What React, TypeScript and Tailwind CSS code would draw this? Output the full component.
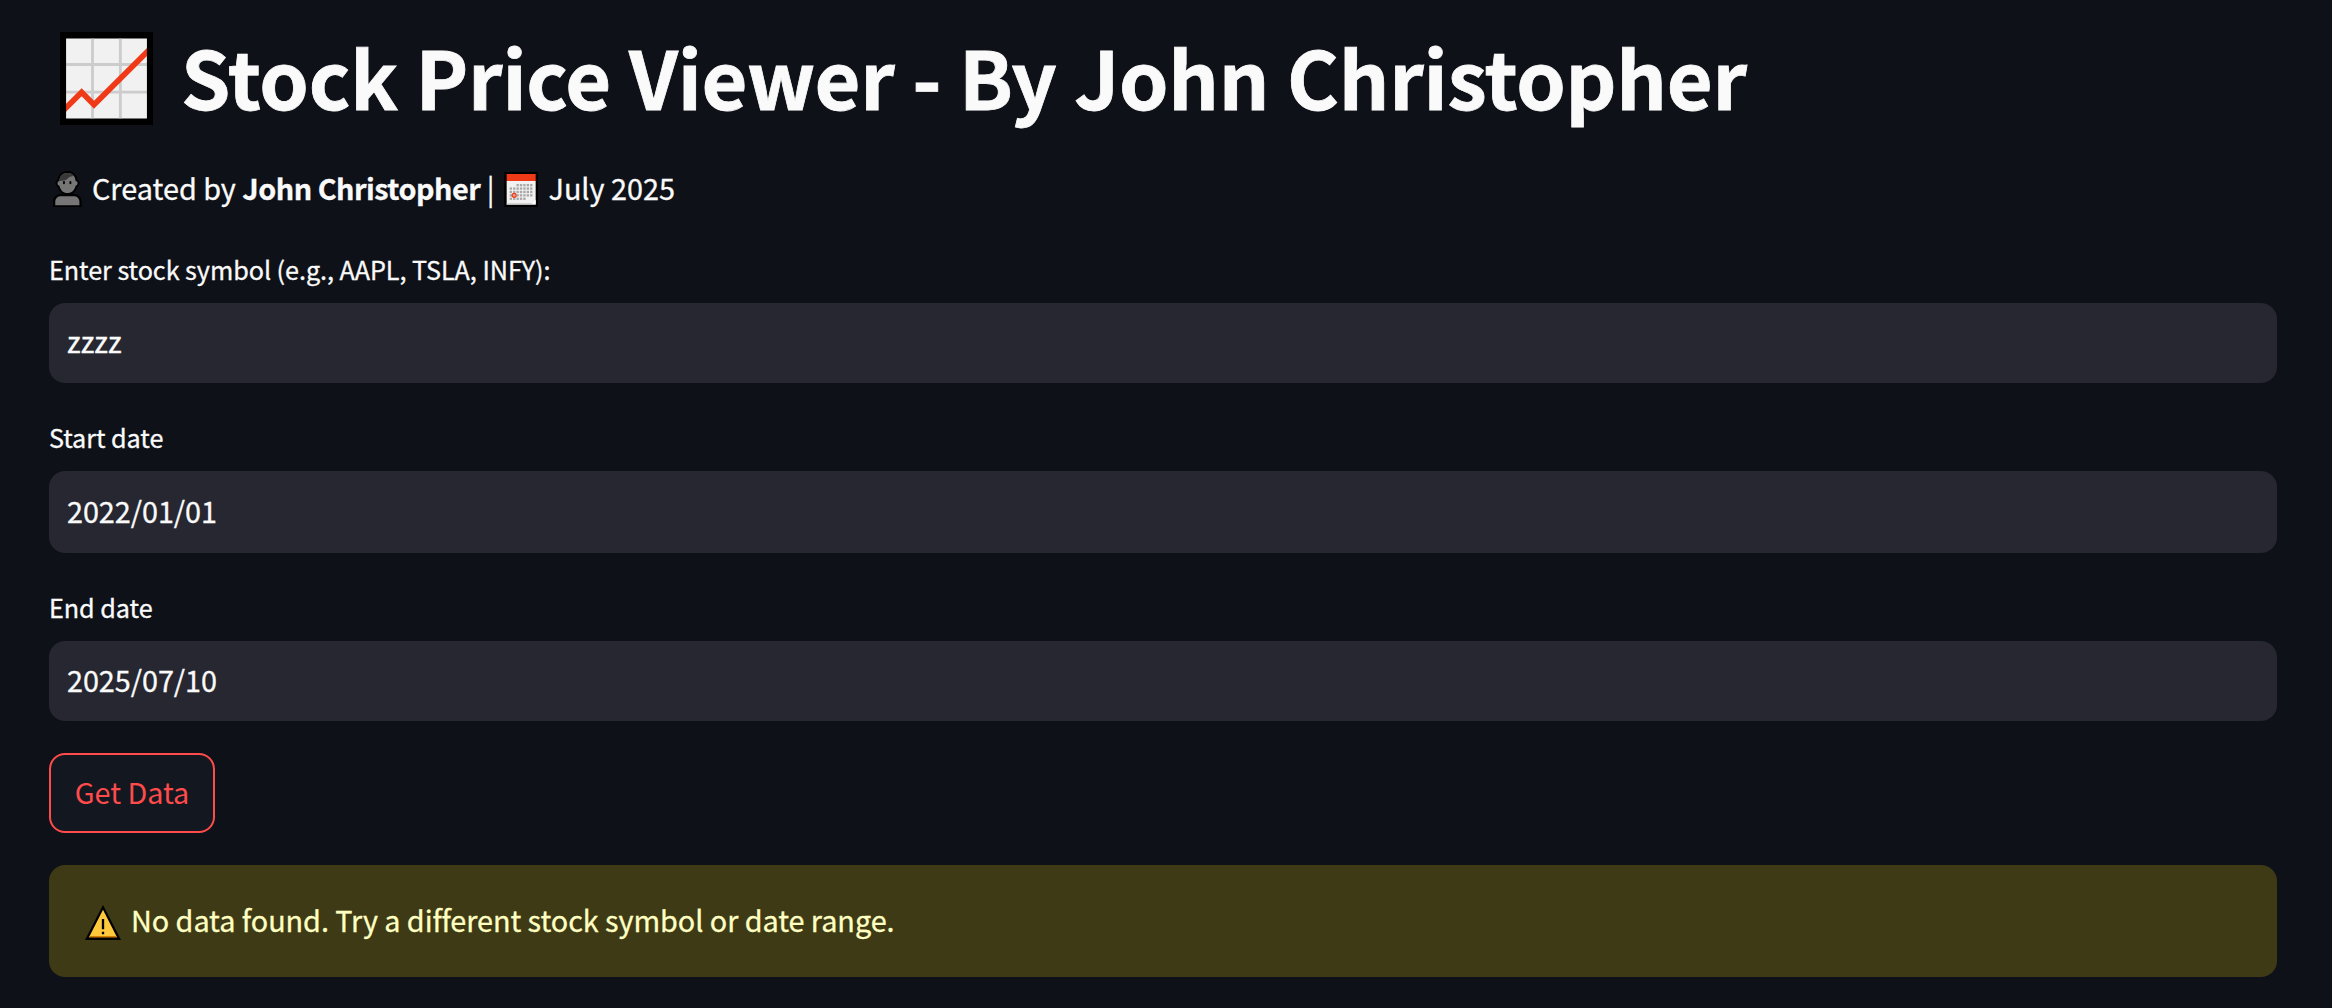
import type { ReactNode } from "react";

function ChartIcon() {
  return (
    <svg className="block h-[93px] w-[93px] shrink-0" viewBox="0 0 279 279">
      <rect width="279" height="279" fill="#000" />
      <rect x="18" y="19" width="243" height="241" fill="#f1f1f1" />
      <path d="M97.5 19V260M181 19V260M18 97.5H261M18 180.5H261" stroke="#cccccc" strokeWidth="8.5" />
      <path d="M10 235.500L65 181L102 218L270 51" fill="none" stroke="#f03a17" strokeWidth="17" />
      <rect x="9" y="9.500" width="261" height="260" fill="none" stroke="#000" strokeWidth="18.500" />
    </svg>
  );
}

function PersonIcon() {
  return (
    <svg className="mt-[2px] block h-[36px] w-[29px] shrink-0" viewBox="0 0 90 108" preserveAspectRatio="none">
      <path d="M45 0C61 0 74 10 76 27C85 30 84 44 75 48C73 57 67 64 60 69H65C79 69 89 79 89 93V108H0V93C0 79 10 69 24 69H29C22 64 17 57 15 48C6 44 5 30 14 27C16 10 29 0 45 0Z" fill="#000" />
      <path d="M7 103V93C7 82 15 76 25 76H64C74 76 82 82 82 93V103Z" fill="#767676" />
      <path d="M45 6C60 6 70 16 70 30C79 31 78 43 70 44C67 58 58 66 45 66C32 66 23 58 20 44C12 43 12 31 20 30C20 16 30 6 45 6Z" fill="#767676" />
      <path d="M20 30C20 15 30 6 45 6C54 6 61 10 65 15C56 15 50 18 45 23C38 29 30 29 20 30Z" fill="#383838" />
      <rect x="31" y="30" width="6" height="10" rx="3" fill="#000" />
      <rect x="51" y="30" width="6" height="10" rx="3" fill="#000" />
    </svg>
  );
}

const calendarCells = [
  [2, 3, 4, 5, 6],
  [0, 1, 2, 3, 4, 5, 6],
  [0, 1, 2, 3, 4, 5, 6],
  [0, 1, 2, 3, 4, 5, 6],
  [0, 1, 2, 3, 4],
];

function CalendarIcon() {
  return (
    <svg className="block h-[35px] w-[34px] shrink-0" viewBox="0 0 102 105">
      <rect width="102" height="105" fill="#000" />
      <rect x="8" y="6" width="87" height="21" fill="#f03a17" />
      <rect x="8" y="27" width="87" height="71" fill="#f1f1f1" />
      <path d="M8 95.500H95" stroke="#cccccc" strokeWidth="4" />
      <path d="M83 95L95 83V95Z" fill="#fff" />
      {calendarCells.map((row, r) =>
        row.map((c) => <rect key={`${r}-${c}`} x={17 + c * 10.2} y={36 + r * 10.2} width="7" height="7" fill="#a8a8a8" />)
      )}
      <circle cx="30.500" cy="70" r="6" fill="#f1a090" stroke="#f03a17" strokeWidth="3.500" />
    </svg>
  );
}

function WarningIcon() {
  return (
    <svg className="block h-[35px] w-[36px] shrink-0" viewBox="0 0 108 105">
      <path d="M54 0L108 105H0Z" fill="#000" />
      <path d="M54 14L96 97H12Z" fill="#ffc83d" />
      <path d="M12 97L14 93H94L96 97Z" fill="#d67d00" />
      <path d="M54 42V73M54 80V88" stroke="#000" strokeWidth="7" />
    </svg>
  );
}

function Field({ label, children }: { label: string; children: ReactNode }) {
  return (
    <div className="flex flex-col gap-3.5">
      <label className="h-10 text-[25.2px] leading-10 tracking-[-0.05px] whitespace-nowrap">{label}</label>
      {children}
    </div>
  );
}

const box = "flex items-center rounded-2xl bg-[#262730] pl-[18px] text-[28.8px] leading-[48px] tracking-[-0.05px]";

export default function App() {
  return (
    <main className="flex h-[1008px] w-full flex-col overflow-hidden bg-[#0e1117] pr-[55px] pl-[49px] font-['Noto_Sans_CJK_SC',sans-serif] text-[#fafafa] [-webkit-text-stroke:0.3px]">
      <h1 className="mt-[21px] flex h-[110px] items-center pl-[11px] text-[79.2px] leading-[110px] font-bold whitespace-nowrap [-webkit-text-stroke:0.8px]">
        <span className="mb-[-5px]"><ChartIcon /></span>
        <span className="ml-[28px] tracking-[-0.23px]">Stock Price Viewer - By John Christopher</span>
      </h1>
      <div className="mt-[33px] flex h-12 items-center pl-1 text-[28.8px] leading-[48px] whitespace-nowrap">
        <PersonIcon />
        <span className="ml-[10px]">Created by <b className="font-bold tracking-[-0.5px]">John Christopher</b> |</span>
        <span className="mt-[3px] ml-[10px]"><CalendarIcon /></span>
        <span className="ml-[10px]">July 2025</span>
      </div>
      <div className="mt-[37px] flex flex-col gap-[34px]">
        <Field label="Enter stock symbol (e.g., AAPL, TSLA, INFY):">
          <div className={`${box} h-20 pb-[5px]`}>zzzz</div>
        </Field>
        <Field label="Start date">
          <div className={`${box} h-[82px] pb-[3px]`}>2022/01/01</div>
        </Field>
        <Field label="End date">
          <div className={`${box} h-20 pb-[3px]`}>2025/07/10</div>
        </Field>
      </div>
      <button className="mt-8 flex h-20 w-[166px] items-center justify-center rounded-2xl border-2 border-[#ff4b4b] bg-[#131720] pb-[3px] text-[28.8px] leading-[48px] tracking-[-0.05px] whitespace-nowrap text-[#ff4b4b] [-webkit-text-stroke:0px]">
        Get Data
      </button>
      <div className="mt-8 flex h-28 items-center rounded-2xl bg-[#3e3a16] pb-[3px] pl-9 text-[28.8px] leading-[48px] whitespace-nowrap text-[#ffffc2]">
        <span className="mt-[5px]"><WarningIcon /></span>
        <span className="ml-[10px] tracking-[-0.05px]">
          No data found. Try a di<span className="tracking-[-0.5px]">ff</span>erent stock symbol or date range.
        </span>
      </div>
    </main>
  );
}
